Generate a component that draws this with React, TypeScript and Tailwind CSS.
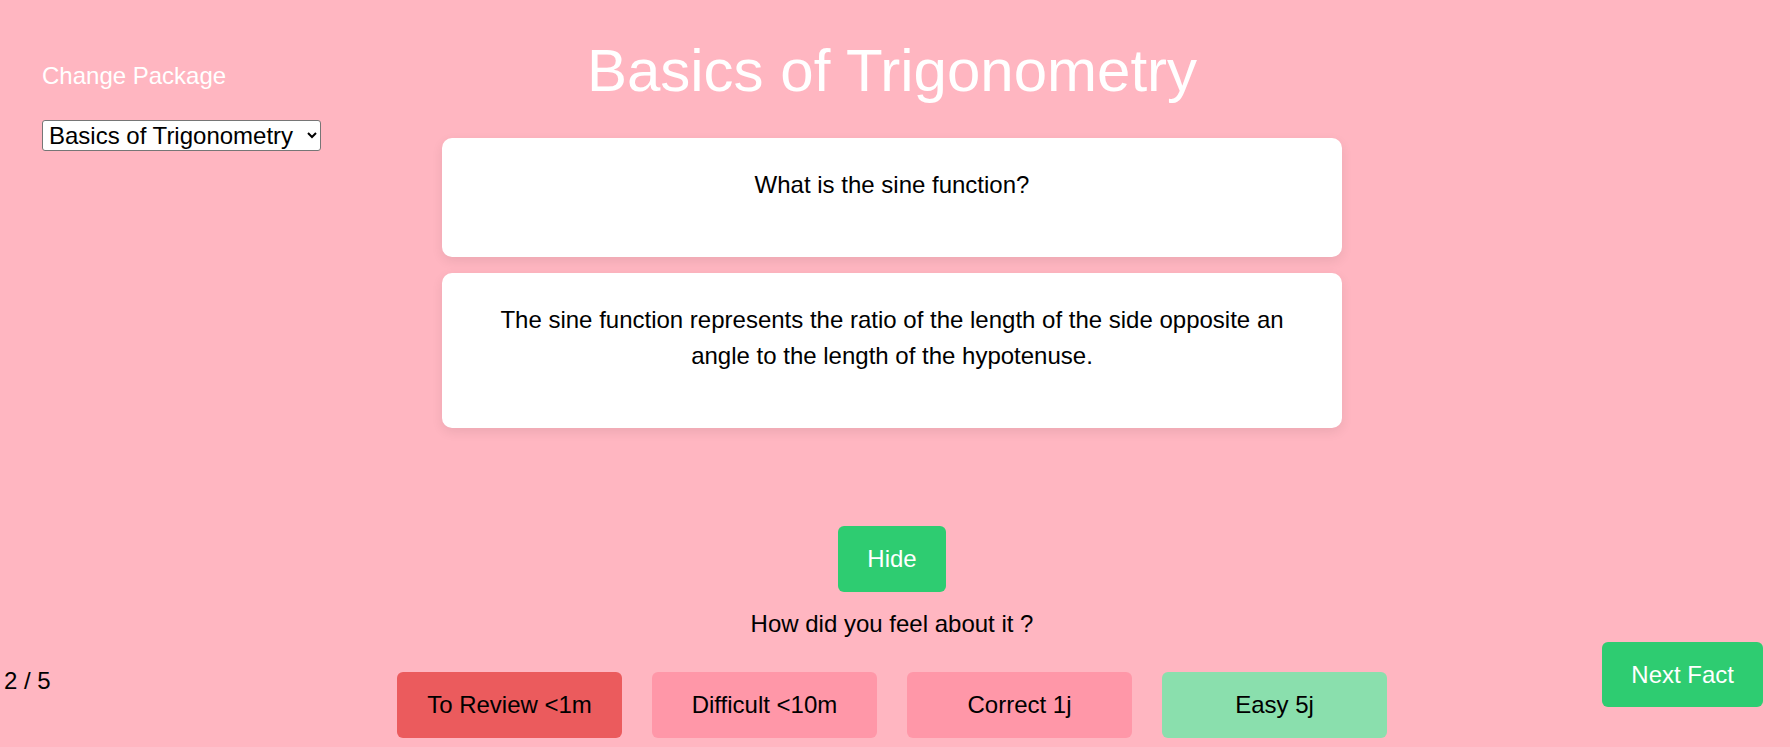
import React, { useState } from 'react'

const ratings = [
  { label: 'To Review <1m', color: 'bg-[#eb5b5d]' },
  { label: 'Difficult <10m', color: 'bg-[#ff97a8]' },
  { label: 'Correct 1j', color: 'bg-[#ff97a8]' },
  { label: 'Easy 5j', color: 'bg-[#8adfad]' },
]

const App = () => {
  const [showAnswer, setShowAnswer] = useState(true)

  return (
    <div className="grid grid-cols-[392px_1000px_1fr] min-h-screen bg-[#ffb6c1] font-['Liberation_Sans',Arial,sans-serif] text-2xl text-black">
      {/* sidebar */}
      <aside className="flex flex-col">
        <div className="pt-[60px] pl-[42px]">
          <p className="text-white leading-8">Change Package</p>
          <select className="mt-[28px] w-[279px] h-[31px] bg-white border border-[#767676] rounded-[3px] pl-[2px] text-black leading-none">
            <option>Basics of Trigonometry</option>
          </select>
        </div>
        <p className="mt-auto mb-[50px] pl-1 leading-8">2 / 5</p>
      </aside>

      {/* main */}
      <main className="flex flex-col items-center pb-[8px]">
        <h1 className="mt-[35px] text-[60px] leading-[72px] text-white">Basics of Trigonometry</h1>

        <div className="mt-[31px] w-[900px] flex flex-col gap-4">
          <div className="bg-white rounded-[10px] shadow-[0_4px_12px_rgba(0,0,0,0.08)] px-8 pt-[29px] pb-[54px] text-center leading-9">
            What is the sine function?
          </div>
          {showAnswer && (
            <div className="bg-white rounded-[10px] shadow-[0_4px_12px_rgba(0,0,0,0.08)] px-8 pt-[29px] pb-[54px] text-center leading-9">
              The sine function represents the ratio of the length of the side opposite an angle to the length of the hypotenuse.
            </div>
          )}
        </div>

        <button
          className="mt-[98px] h-[66px] px-[29px] bg-[#2ecc71] text-white rounded-md"
          onClick={() => setShowAnswer(!showAnswer)}
        >
          {showAnswer ? 'Hide' : 'Show'}
        </button>

        <p className="mt-4 leading-8">How did you feel about it ?</p>

        <div className="mt-8 flex gap-[30px]">
          {ratings.map((r) => (
            <button key={r.label} className={`w-[225px] h-[66px] rounded-md ${r.color}`}>
              {r.label}
            </button>
          ))}
        </div>
      </main>

      {/* next */}
      <div className="flex flex-col">
        <button className="mt-auto mb-[40px] mr-[27px] self-end h-[65px] px-[29px] bg-[#2ecc71] text-white rounded-md">
          Next Fact
        </button>
      </div>
    </div>
  )
}

export default App
